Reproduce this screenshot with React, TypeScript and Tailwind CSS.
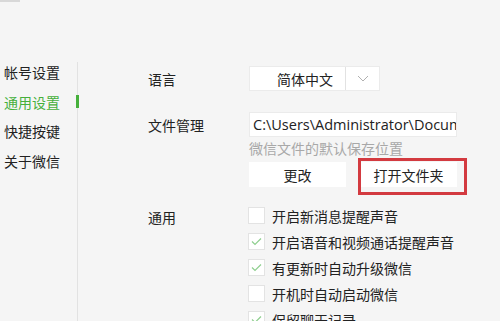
const font = { fontFamily: '"Noto Sans CJK SC", "Noto Sans", sans-serif' };

const Check = ({ on, label }: { on?: boolean; label: string }) => (
  <div className="flex h-[17px] items-center gap-[7px]">
    <div className="flex size-[17px] items-center justify-center border border-[#e3e3e3] bg-white">
      {on && (
        <svg width="11" height="9" viewBox="0 0 11 9" fill="none">
          <path d="M1 4.5 L4 7.5 L10 1.5" stroke="#8fcf8f" strokeWidth="1.2" />
        </svg>
      )}
    </div>
    <span className="whitespace-nowrap text-[14px] leading-5 text-[#222]">{label}</span>
  </div>
);

export default function App() {
  return (
    <div
      className="relative flex h-[321px] w-[504px] overflow-hidden bg-[#f5f5f5]"
      style={font}
    >
      <div className="absolute left-0 top-0 h-[2px] w-[20px] bg-[#d8d8d8]" />
      <div className="absolute right-0 top-0 h-full w-[4px] bg-white" />

      {/* sidebar */}
      <div className="mt-[62px] flex w-[78px] shrink-0 flex-col gap-[9.5px] border-r border-[#e2e2e2] pl-[4px] text-[14px] leading-5 text-[#222]">
        <div>帐号设置</div>
        <div className="relative text-[#46b03c]">
          通用设置
          <span className="absolute right-[-2px] top-[3px] h-[13px] w-[3px] bg-[#46b03c]" />
        </div>
        <div>快捷按键</div>
        <div>关于微信</div>
      </div>

      {/* content */}
      <div className="flex flex-col pl-[70px] pt-[66px] text-[14px] text-[#222]">
        <div className="flex items-center">
          <span className="w-[101px] leading-5">语言</span>
          <div className="flex h-[25px] w-[131px] items-center border border-[#ebebeb] bg-white">
            <span className="flex-1 whitespace-nowrap pl-[27px] leading-5">简体中文</span>
            <span className="flex h-full w-[34px] items-center justify-center border-l border-[#e2e2e2]">
              <svg width="12" height="7" viewBox="0 0 12 7" fill="none">
                <path d="M1 1 L6 6 L11 1" stroke="#b0b0b0" strokeWidth="1" />
              </svg>
            </span>
          </div>
        </div>

        <div className="mt-[21px] flex">
          <span className="w-[101px] pt-[3px] leading-5">文件管理</span>
          <div className="flex flex-col">
            <div className="flex h-[25px] w-[208px] items-center overflow-hidden whitespace-nowrap border border-[#ebebeb] bg-white pl-[3px]">
              <span className="text-[14.5px] leading-5" style={{ fontFamily: '"Open Sans", "Noto Sans", sans-serif' }}>
                C:\Users\Administrator\Documents\WeChat Files
              </span>
            </div>
            <span className="mt-[1px] leading-5 text-[#a8a8a8]">微信文件的默认保存位置</span>
            <div className="mt-[4px] flex gap-[14px]">
              <button className="h-[25px] w-[97px] bg-white text-[14px] leading-5">更改</button>
              <div className="relative">
                <button className="h-[25px] w-[97px] bg-white text-[14px] leading-5">打开文件夹</button>
                <div className="absolute left-[-2px] top-[-4px] h-[37px] w-[109px] border-[3px] border-[#d33a40]" />
              </div>
            </div>
          </div>
        </div>

        <div className="mt-[20px] flex">
          <span className="w-[100px] leading-5">通用</span>
          <div className="flex flex-col gap-[9px]">
            <Check label="开启新消息提醒声音" />
            <Check on label="开启语音和视频通话提醒声音" />
            <Check on label="有更新时自动升级微信" />
            <Check label="开机时自动启动微信" />
            <Check on label="保留聊天记录" />
          </div>
        </div>
      </div>
    </div>
  );
}
